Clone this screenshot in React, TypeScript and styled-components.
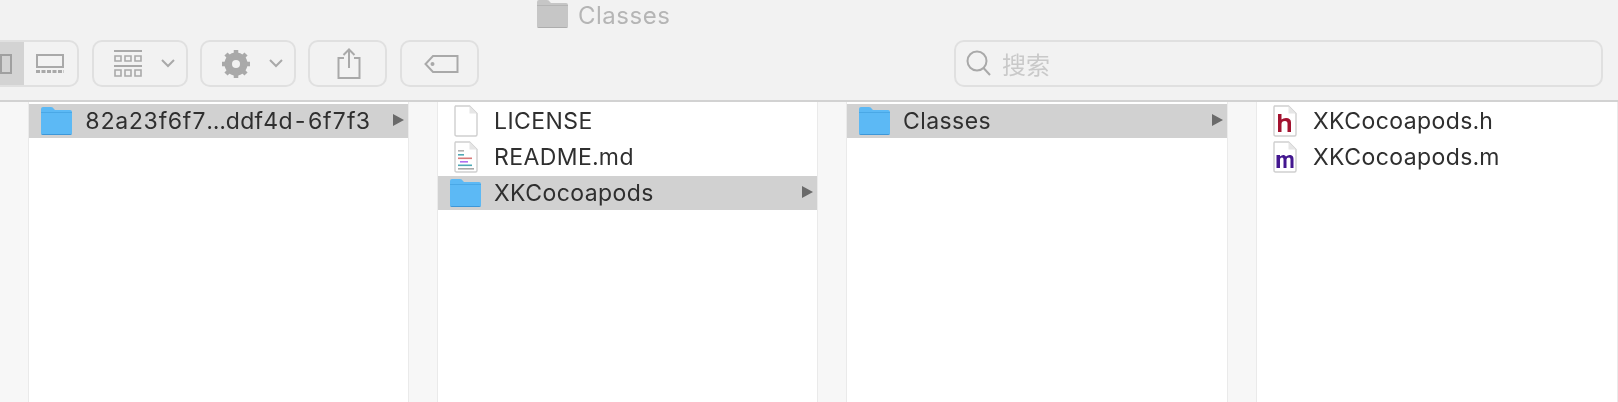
import React from "react";
import styled, { createGlobalStyle } from "styled-components";

const GlobalStyle = createGlobalStyle`
  html, body {
    margin: 0;
    padding: 0;
    width: 1618px;
    height: 402px;
    overflow: hidden;
    background: #f6f6f6;
  }
  * {
    box-sizing: border-box;
  }
`;

const FolderIcon = ({ gray }: { gray?: boolean }) => (
  <svg width="33" height="30" viewBox="0 0 33 30">
    <path
      d="M1 5 V3 Q1 1 3 1 H11 Q13 1 14 3 L15 4 H30 Q32 4 32 6 V27 Q32 29 30 29 H3 Q1 29 1 27 Z"
      fill={gray ? "#c6c6c6" : "#5cb9f5"}
    />
    <path d="M1 6 H32 V7 H1 Z" fill={gray ? "#b5b5b5" : "#4aa8e6"} />
    <path d="M1 27 Q1 29 3 29 H30 Q32 29 32 27 V28 H1 Z" fill={gray ? "#adadad" : "#3d97d8"} />
  </svg>
);

const PageShape = ({ children }: { children?: React.ReactNode }) => (
  <svg width="24" height="32" viewBox="0 0 24 32">
    <path d="M1.5 1 H15.5 L23 8.5 V29.5 Q23 31 21.5 31 H2.5 Q1 31 1 29.5 V2 Z" fill="#fff" stroke="#cfcfcf" strokeWidth="1.4" />
    <path d="M15.5 1 V8.5 H23 Z" fill="#e6e6e6" />
    {children}
  </svg>
);

const Chevron = () => (
  <svg width="14" height="9" viewBox="0 0 14 9" fill="none" stroke="#a9a9a9" strokeWidth="2">
    <path d="M1 1 L7 7 L13 1" />
  </svg>
);

const Page = styled.div`
  display: flex;
  flex-direction: column;
  width: 1618px;
  height: 402px;
  font-family: Inter, "Liberation Sans", "Noto Sans CJK SC", sans-serif;
  filter: blur(0.45px);
`;

const Toolbar = styled.header`
  flex: none;
  display: flex;
  flex-direction: column;
  height: 102px;
  background: #f2f2f2;
  border-bottom: 2px solid #d2d2d2;
`;

const WindowTitle = styled.div`
  display: flex;
  align-items: center;
  gap: 9px;
  height: 30px;
  margin: -1px 0 11px 536px;
  color: #b5b5b5;
  font-size: 24px;
  letter-spacing: 0.5px;
`;

const TitleText = styled.span`
  padding-top: 3px;
`;

const Controls = styled.div`
  display: flex;
  align-items: center;
  margin-left: -21px;
  height: 47px;
`;

const Tool = styled.div<{ $width: number; $gap?: number; $nudge?: number }>`
  flex: none;
  display: flex;
  align-items: center;
  justify-content: center;
  gap: 18px;
  width: ${(p) => p.$width}px;
  height: 47px;
  margin-right: ${(p) => p.$gap ?? 13}px;
  padding-left: ${(p) => p.$nudge ?? 0}px;
  border: 2px solid #e0e0e0;
  border-radius: 10px;
  color: #a9a9a9;
`;

const SegmentedTool = styled(Tool)`
  padding-left: 0;
  overflow: hidden;
`;

const ActiveSegment = styled.div`
  flex: none;
  width: 43px;
  height: 100%;
  display: flex;
  align-items: center;
  justify-content: flex-end;
  padding-right: 12px;
  background: #d3d3d3;
`;

const IdleSegment = styled.div`
  flex: 1;
  height: 100%;
  display: flex;
  align-items: center;
  justify-content: center;
  padding-right: 1px;
  margin-left: -18px;
`;

const SearchBox = styled.div`
  flex: none;
  width: 649px;
  height: 47px;
  margin-left: auto;
  margin-right: 15px;
  display: flex;
  align-items: center;
  gap: 10px;
  padding-left: 10px;
  border: 2px solid #e0e0e0;
  border-radius: 10px;
  color: #c9c9c9;
  font-size: 24px;
  font-family: "Noto Sans CJK SC", sans-serif;
`;

const Browser = styled.main`
  flex: 1;
  display: flex;
  background: #f7f7f7;
`;

const Column = styled.section<{ $width: number }>`
  flex: none;
  width: ${(p) => p.$width}px;
  margin-left: 28px;
  padding-top: 2px;
  background: #fff;
  border-left: 1px solid #eaeaea;
  border-right: 1px solid #eaeaea;
`;

const Row = styled.div<{ $selected?: boolean }>`
  display: flex;
  align-items: center;
  height: 34px;
  margin-bottom: 2px;
  padding-left: 11px;
  background: ${(p) => (p.$selected ? "#d1d1d1" : "transparent")};
`;

const IconSlot = styled.span`
  flex: none;
  display: flex;
  align-items: center;
  justify-content: center;
  width: 33px;
  height: 34px;
`;

const Name = styled.span<{ $tracking?: number }>`
  margin-left: 12px;
  color: #2f2f2f;
  font-size: 23px;
  letter-spacing: ${(p) => p.$tracking ?? 0.42}px;
  font-variant-numeric: tabular-nums;
  white-space: nowrap;
`;

const Disclosure = styled.span`
  flex: none;
  margin: -2px 4px 0 auto;
  width: 0;
  height: 0;
  border-style: solid;
  border-width: 6px 0 6px 11.5px;
  border-color: transparent transparent transparent #6a6a6a;
`;

const ReadmePage = () => (
  <PageShape>
    <rect x="4" y="9" width="6" height="1.6" fill="#b0b0b0" />
    <rect x="4" y="13" width="6" height="1.6" fill="#4fa9b5" />
    <rect x="4" y="16.5" width="14" height="1.6" fill="#d87a7a" />
    <rect x="6" y="20" width="8" height="1.6" fill="#b070f0" />
    <rect x="4" y="23.5" width="14" height="1.6" fill="#4fa9b5" />
    <rect x="4" y="27" width="16" height="1.6" fill="#a8a8a8" />
  </PageShape>
);

const SourcePage = ({ letter, tint }: { letter: "h" | "m"; tint: string }) => (
  <PageShape>
    {letter === "h" ? (
      <path d="M5 9 H8.5 V14.5 Q10 13 13 13 Q18 13 18 17.5 V27 H14.5 V18.5 Q14.5 16 12 16 Q8.5 16 8.5 19 V27 H5 Z" fill={tint} />
    ) : (
      <path d="M3.5 14 H7 V15.5 Q9 13.5 11 14 Q12.5 14.5 13 15.5 Q15 13.5 17.5 14 Q20.5 14.5 20.5 18 V27 H17.5 V18.5 Q17.5 16.5 16 16.5 Q13.5 16.5 13.5 18.5 V27 H10.5 V18.5 Q10.5 16.5 9 16.5 Q7 16.5 7 18.5 V27 H3.5 Z" fill={tint} />
    )}
  </PageShape>
);

const App = () => (
  <>
    <GlobalStyle />
    <Page>
      <Toolbar>
        <WindowTitle>
          <FolderIcon gray />
          <TitleText>Classes</TitleText>
        </WindowTitle>
        <Controls>
          <SegmentedTool $width={100}>
            <ActiveSegment>
              <svg width="12" height="20" viewBox="0 0 12 20" fill="none" stroke="#a0a0a0" strokeWidth="2">
                <rect x="1" y="1" width="10" height="18" />
              </svg>
            </ActiveSegment>
            <IdleSegment>
              <svg width="28" height="20" viewBox="0 0 28 20" fill="none">
                <rect x="1" y="1" width="26" height="12" stroke="#a9a9a9" strokeWidth="2" />
                <path d="M0 17.5 H28" stroke="#a9a9a9" strokeWidth="3" strokeDasharray="4 1.5" />
              </svg>
            </IdleSegment>
          </SegmentedTool>
          <Tool $width={96} $gap={12} $nudge={8}>
            <svg width="30" height="27" viewBox="0 0 30 27" fill="none" stroke="#a9a9a9">
              <path d="M1 1 H29 M1 16 H29" strokeWidth="2" />
              <path d="M2 6 H8 V11 H2 Z M12 6 H18 V11 H12 Z M22 6 H28 V11 H22 Z M2 20 H8 V26 H2 Z M12 20 H18 V26 H12 Z M22 20 H28 V26 H22 Z" strokeWidth="1.6" />
            </svg>
            <Chevron />
          </Tool>
          <Tool $width={96} $gap={12} $nudge={8}>
            <svg width="30" height="30" viewBox="0 0 30 30">
              <circle cx="15" cy="15" r="8.5" fill="none" stroke="#a9a9a9" strokeWidth="6" />
              <path d="M15 1 V29 M1 15 H29 M5 5 L25 25 M25 5 L5 25" stroke="#a9a9a9" strokeWidth="4.5" />
              <circle cx="15" cy="15" r="4" fill="#f2f2f2" />
            </svg>
            <Chevron />
          </Tool>
          <Tool $width={79} $nudge={2}>
            <svg width="24" height="31" viewBox="0 0 24 31" fill="none" stroke="#a9a9a9" strokeWidth="2">
              <path d="M7 10 H1.5 V30 H22.5 V10 H17 M12 20 V1.5 M6.5 7 L12 1.5 L17.5 7" />
            </svg>
          </Tool>
          <Tool $width={79} $nudge={3}>
            <svg width="35" height="18" viewBox="0 0 35 18" fill="none" stroke="#a9a9a9" strokeWidth="2">
              <path d="M33.5 1 H9 L1.5 9 L9 17 H33.5 Z" />
              <circle cx="8.5" cy="9" r="1" />
            </svg>
          </Tool>
          <SearchBox>
            <svg width="26" height="27" viewBox="0 0 26 27" fill="none" stroke="#a9a9a9" strokeWidth="2">
              <circle cx="11" cy="11" r="9.5" />
              <path d="M17.5 18 L24 25" />
            </svg>
            搜索
          </SearchBox>
        </Controls>
      </Toolbar>
      <Browser>
        <Column $width={381}>
          <Row $selected>
            <IconSlot>
              <FolderIcon />
            </IconSlot>
            <Name $tracking={0.24}>82a23f6f7...ddf4d-6f7f3</Name>
            <Disclosure />
          </Row>
        </Column>
        <Column $width={381}>
          <Row>
            <IconSlot>
              <PageShape />
            </IconSlot>
            <Name>LICENSE</Name>
          </Row>
          <Row>
            <IconSlot>
              <ReadmePage />
            </IconSlot>
            <Name>README.md</Name>
          </Row>
          <Row $selected>
            <IconSlot>
              <FolderIcon />
            </IconSlot>
            <Name>XKCocoapods</Name>
            <Disclosure />
          </Row>
        </Column>
        <Column $width={382}>
          <Row $selected>
            <IconSlot>
              <FolderIcon />
            </IconSlot>
            <Name>Classes</Name>
            <Disclosure />
          </Row>
        </Column>
        <Column $width={362}>
          <Row>
            <IconSlot>
              <SourcePage letter="h" tint="#a3122f" />
            </IconSlot>
            <Name>XKCocoapods.h</Name>
          </Row>
          <Row>
            <IconSlot>
              <SourcePage letter="m" tint="#43178f" />
            </IconSlot>
            <Name>XKCocoapods.m</Name>
          </Row>
        </Column>
      </Browser>
    </Page>
  </>
);

export default App;
